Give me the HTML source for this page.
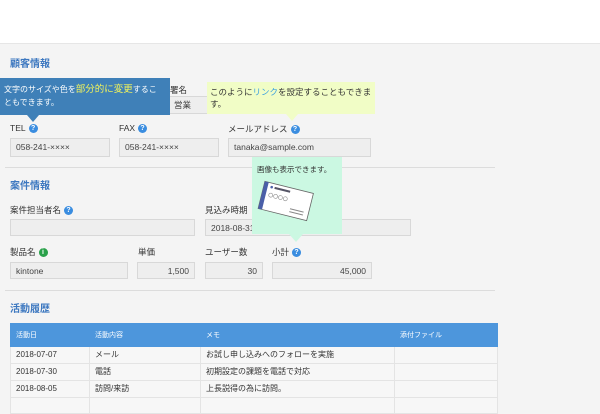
<!DOCTYPE html>
<html><head><meta charset="utf-8"><style>
body{margin:0;width:600px;height:400px;overflow:hidden;background:#f4f4f4;font-family:"Liberation Sans","Noto Sans CJK JP",sans-serif;position:relative;color:#333}
.a{position:absolute}
.top{left:0;top:0;width:600px;height:43px;background:#fff;border-bottom:1px solid #e6e6e6}
.h{font-size:10px;font-weight:bold;color:#3d78c0}
.l{font-size:8.5px;color:#333}
.i{background:#eeeeee;border:1px solid #d8d8d8;box-sizing:border-box;font-size:8.5px;color:#444;padding-left:5px;line-height:16px}
.r{text-align:right;padding-right:5px}
.q{display:inline-block;width:9px;height:9px;border-radius:50%;background:#3a8de0;color:#fff;font-size:7px;line-height:9px;text-align:center;font-weight:bold;vertical-align:middle;margin-left:3px}
.hr{height:1px;background:#dcdcdc;left:5px;width:490px}
table{border-collapse:collapse;font-size:8px;table-layout:fixed}
td{height:16px;line-height:16px;border:1px solid #e4e4e4;padding:0 0 0 5px;background:#f7f7f7;box-sizing:border-box}
th{height:23px;background:#4d96dc;color:#fff;font-weight:normal;text-align:left;padding:0 0 0 5px;font-size:7px;border:1px solid #4d96dc;box-sizing:border-box}
</style></head><body>
<div class="a top"></div>
<div class="a h" style="left:10px;top:55px">顧客情報</div>
<div class="a l" style="left:170px;top:84px">署名</div>
<div class="a i" style="left:168px;top:96px;width:45px;height:18px">営業</div>
<div class="a l" style="left:10px;top:123px">TEL<span class="q">?</span></div>
<div class="a l" style="left:119px;top:123px">FAX<span class="q">?</span></div>
<div class="a l" style="left:228px;top:123px">メールアドレス<span class="q">?</span></div>
<div class="a i" style="left:10px;top:138px;width:100px;height:19px;line-height:17px">058-241-××××</div>
<div class="a i" style="left:119px;top:138px;width:100px;height:19px;line-height:17px">058-241-××××</div>
<div class="a i" style="left:228px;top:138px;width:143px;height:19px;line-height:17px">tanaka@sample.com</div>
<div class="a hr" style="top:167px"></div>
<div class="a h" style="left:10px;top:177px">案件情報</div>
<div class="a l" style="left:10px;top:204px">案件担当者名<span class="q">?</span></div>
<div class="a i" style="left:10px;top:219px;width:185px;height:17px"></div>
<div class="a l" style="left:205px;top:204px">見込み時期</div>
<div class="a i" style="left:205px;top:219px;width:206px;height:17px">2018-08-31</div>
<div class="a l" style="left:10px;top:246px">製品名<span class="q" style="background:#2aa14a">i</span></div>
<div class="a l" style="left:138px;top:246px">単価</div>
<div class="a l" style="left:205px;top:246px">ユーザー数</div>
<div class="a l" style="left:272px;top:246px">小計<span class="q">?</span></div>
<div class="a i" style="left:10px;top:262px;width:118px;height:17px">kintone</div>
<div class="a i r" style="left:137px;top:262px;width:58px;height:17px">1,500</div>
<div class="a i r" style="left:205px;top:262px;width:58px;height:17px">30</div>
<div class="a i r" style="left:272px;top:262px;width:100px;height:17px">45,000</div>
<div class="a hr" style="top:290px"></div>
<div class="a h" style="left:10px;top:300px">活動履歴</div>
<table class="a" style="left:10px;top:323px;width:488px">
<tr><th style="width:79px">活動日</th><th style="width:111px">活動内容</th><th style="width:194px">メモ</th><th>添付ファイル</th></tr>
<tr><td>2018-07-07</td><td>メール</td><td>お試し申し込みへのフォローを実施</td><td></td></tr>
<tr><td>2018-07-30</td><td>電話</td><td>初期設定の課題を電話で対応</td><td></td></tr>
<tr><td>2018-08-05</td><td>訪問/来訪</td><td>上長説得の為に訪問。</td><td></td></tr>
<tr><td></td><td></td><td></td><td></td></tr>
</table>
<div class="a" style="left:0;top:78px;width:170px;height:37px;background:#3f80b8;color:#fff;font-size:8px;line-height:13px;padding:5px 4px;box-sizing:border-box">文字のサイズや色を<span style="color:#f3f35a;font-size:9.5px">部分的に変更</span>するこ<br>ともできます。</div>
<div class="a" style="left:27px;top:115px;width:0;height:0;border-left:6px solid transparent;border-right:6px solid transparent;border-top:7px solid #3f80b8"></div>
<div class="a" style="left:207px;top:82px;width:168px;height:32px;background:#f1fdc6;font-size:8.5px;line-height:12px;padding:4px 3px;box-sizing:border-box;color:#333">このように<span style="color:#3aa0e0">リンク</span>を設定することもできま<br>す。</div>
<div class="a" style="left:286px;top:114px;width:0;height:0;border-left:6px solid transparent;border-right:6px solid transparent;border-top:7px solid #f1fdc6"></div>
<div class="a" style="left:252px;top:157px;width:90px;height:77px;background:#cbf8e2;font-size:7.5px;padding:7px 5px;box-sizing:border-box;color:#333">画像も表示できます。</div>
<div class="a" style="left:289px;top:234px;width:0;height:0;border-left:7px solid transparent;border-right:7px solid transparent;border-top:8px solid #cbf8e2"></div>
<svg class="a" style="left:256px;top:175px" width="60" height="50">
<g transform="rotate(14 30 25)">
<rect x="5" y="12" width="50" height="28" fill="#fff" stroke="#666" stroke-width="0.8"/>
<rect x="5" y="12" width="4" height="28" fill="#4a5fa8"/>
<circle cx="13" cy="16" r="1.3" fill="#4a5fa8"/>
<rect x="16" y="15" width="16" height="2" fill="#556"/>
<circle cx="14" cy="24" r="2" fill="none" stroke="#888" stroke-width="0.6"/>
<circle cx="19" cy="24" r="2" fill="none" stroke="#888" stroke-width="0.6"/>
<circle cx="24" cy="24" r="2" fill="none" stroke="#888" stroke-width="0.6"/>
<circle cx="29" cy="24" r="2" fill="none" stroke="#888" stroke-width="0.6"/>
<rect x="36" y="32" width="14" height="1" fill="#888"/><rect x="36" y="35" width="14" height="1" fill="#888"/>
</g></svg>
</body></html>
